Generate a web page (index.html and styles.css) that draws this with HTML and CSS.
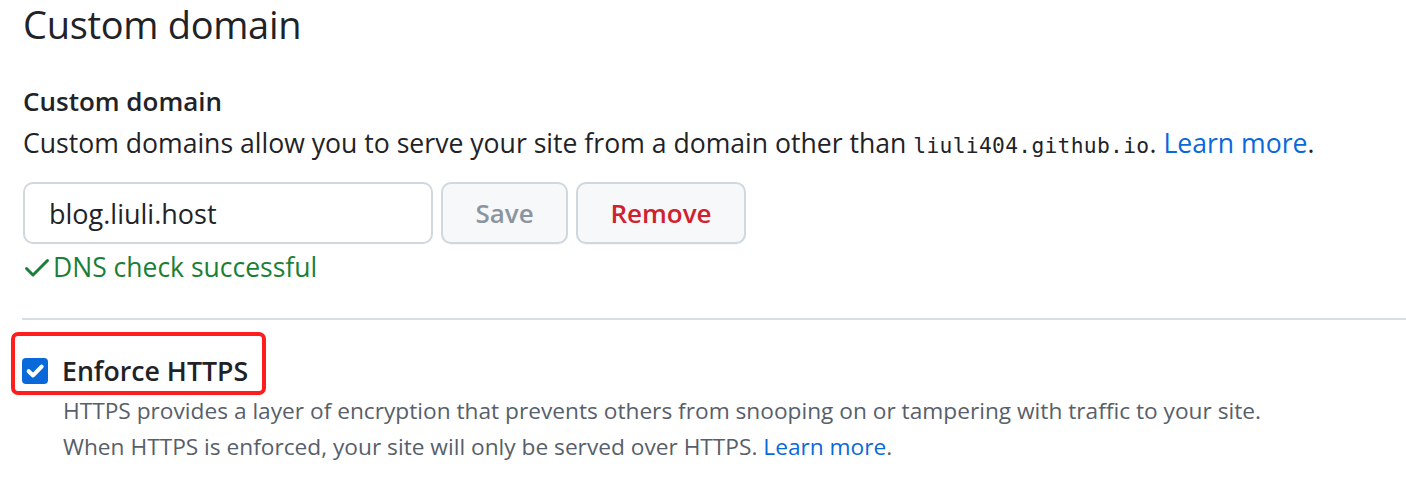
FILE: index.html
```html
<!DOCTYPE html>
<html lang="en">
<head>
<meta charset="utf-8">
<title>Custom domain</title>
<link rel="stylesheet" href="styles.css">
</head>
<body>
<main class="page">
  <h1 class="page-title">Custom domain</h1>

  <section class="domain">
    <h2 class="domain-title">Custom domain</h2>
    <p class="domain-desc">Custom domains allow you to serve your site from a domain other than <code class="mono">liuli404.github.io</code>. <a class="link" href="#">Learn more</a>.</p>

    <form class="domain-form">
      <input class="field" type="text" value="blog.liuli.host">
      <button class="btn btn-save" type="button" disabled>Save</button>
      <button class="btn btn-remove" type="button">Remove</button>
    </form>

    <div class="dns-ok">
      <svg class="dns-icon" viewBox="0 0 16 16" width="32" height="32" aria-hidden="true"><path fill="currentColor" d="M13.78 4.22a.75.75 0 0 1 0 1.06l-7.25 7.25a.75.75 0 0 1-1.06 0L2.22 9.28a.751.751 0 0 1 .018-1.042.751.751 0 0 1 1.042-.018L6 10.94l6.72-6.72a.75.75 0 0 1 1.06 0Z"/></svg>
      <span>DNS check successful</span>
    </div>
  </section>

  <hr class="divider">

  <section class="https">
    <div class="https-row">
      <span class="checkbox" aria-hidden="true">
        <svg viewBox="0 0 16 16" width="22" height="22"><path d="M3.4 8.2 6.6 11.2 12.8 4.8" fill="none" stroke="#fff" stroke-width="3" stroke-linecap="round" stroke-linejoin="round"/></svg>
      </span>
      <label class="https-label">Enforce HTTPS</label>
      <span class="highlight"></span>
    </div>
    <p class="note">HTTPS provides a layer of encryption that prevents others from snooping on or tampering with traffic to your site.<br>When HTTPS is enforced, your site will only be served over HTTPS. <a class="link" href="#">Learn more</a>.</p>
  </section>
</main>
</body>
</html>
```

FILE: styles.css
```css
* { box-sizing: border-box; }

html, body {
  margin: 0;
  padding: 0;
  background: #ffffff;
}

body {
  font-family: "Open Sans", "Noto Sans", sans-serif;
  color: #1f2328;
  overflow: hidden;
}

.page {
  padding-left: 23px;
}

.page-title {
  margin: 0;
  padding-top: 2px;
  font-size: 38px;
  font-weight: 400;
  line-height: 44px;
  letter-spacing: -0.3px;
}

.domain {
  padding-top: 37px;
}

.domain-title {
  margin: 0;
  font-size: 26px;
  font-weight: 600;
  line-height: 36px;
}

.domain-desc {
  margin: 6px 0 0;
  font-size: 26.6px;
  line-height: 36px;
}

.mono {
  font-family: "DejaVu Sans Mono", "Liberation Mono", monospace;
  font-size: 21.3px;
  letter-spacing: 0.3px;
}

.link {
  color: #0969da;
  text-decoration: none;
}

.domain-form {
  display: flex;
  align-items: flex-start;
  margin-top: 18px;
}

.field {
  flex: none;
  width: 410px;
  height: 62px;
  border: 2px solid #d0d7de;
  border-radius: 10px;
  padding: 0 24px;
  font-family: inherit;
  font-size: 27px;
  color: #1f2328;
  background: #ffffff;
  outline: none;
}

.btn {
  flex: none;
  height: 62px;
  border: 2px solid #d0d7de;
  border-radius: 10px;
  background: #f6f8fa;
  font-family: inherit;
  font-size: 26px;
  font-weight: 600;
  padding: 0;
  box-shadow: 0 1px 0 rgba(31, 35, 40, 0.04);
}

.btn-save {
  width: 127px;
  margin-left: 8px;
  color: #8c959f;
}

.btn-remove {
  width: 170px;
  margin-left: 8px;
  color: #cf222e;
}

.dns-ok {
  display: flex;
  align-items: center;
  margin-top: 6px;
  color: #1a7f37;
  font-size: 26.5px;
  line-height: 34px;
}

.dns-icon {
  margin-left: -2px;
  margin-right: 0;
}

.divider {
  margin: 34px 0 0 -1px;
  border: 0;
  border-top: 2px solid #d8dee4;
}

.https {
  padding-top: 33px;
}

.https-row {
  position: relative;
  display: flex;
  align-items: center;
  gap: 14px;
}

.checkbox {
  display: flex;
  align-items: center;
  justify-content: center;
  width: 26px;
  height: 26px;
  margin-left: -1px;
  border-radius: 4px;
  background: #0969da;
}

.https-label {
  font-size: 26.7px;
  font-weight: 600;
  line-height: 36px;
}

.highlight {
  position: absolute;
  left: -12px;
  top: -21px;
  width: 255px;
  height: 63px;
  border: 4px solid #ff1d1d;
  border-radius: 7px;
}

.note {
  margin: 4px 0 0 40px;
  font-size: 22.7px;
  line-height: 36px;
  color: #57606a;
}
```
